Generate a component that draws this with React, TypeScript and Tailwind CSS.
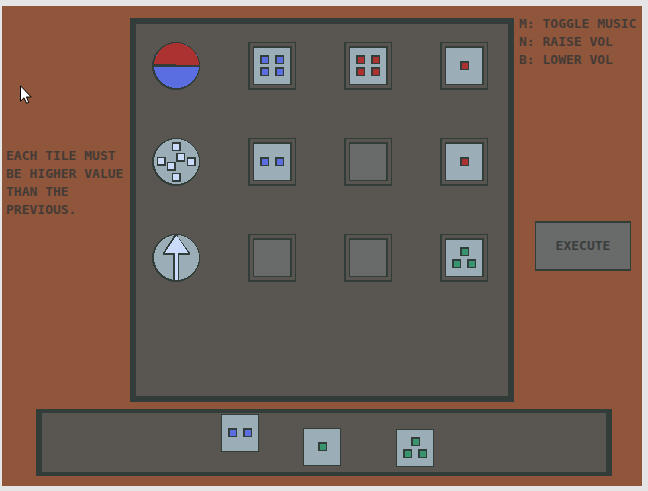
import React from "react";

type PipColor = "blue" | "red" | "green";
type Tile = { count: 1 | 2 | 3 | 4; color: PipColor };

const pipFill: Record<PipColor, string> = {
  blue: "bg-[#5b6ee1]",
  red: "bg-[#ac3232]",
  green: "bg-[#37946e]",
};

const pipRows: Record<Tile["count"], number[]> = {
  1: [1],
  2: [2],
  3: [1, 2],
  4: [2, 2],
};

function Pips({ count, color }: Tile) {
  const rows = pipRows[count];
  return (
    <span className={`flex size-9 flex-col gap-[3px] bg-[#9badb7] ${rows.length === 1 ? "pt-[13px]" : "pt-[7px]"}`}>
      {rows.map((n, row) => (
        <span key={row} className="flex justify-center gap-1.5">
          {Array.from({ length: n }, (_, i) => (
            <span
              key={i}
              className={`size-[9px] border-t-2 border-r border-b border-l-2 border-[#323c39] ${pipFill[color]}`}
            />
          ))}
        </span>
      ))}
    </span>
  );
}

function Slot({ tile }: { tile?: Tile }) {
  return (
    <button
      type="button"
      aria-label={tile ? `${tile.count} ${tile.color}` : "empty"}
      className="size-12 border-t border-r border-b-2 border-l-2 border-[#323c39] p-[3px]"
    >
      <span className="block border-t-2 border-r-2 border-b border-l border-[#323c39]">
        {tile ? <Pips {...tile} /> : <span className="block size-9 bg-[#696a6a]" />}
      </span>
    </button>
  );
}

function TrayTile({ tile, place }: { tile: Tile; place: string }) {
  return (
    <button
      type="button"
      aria-label={`${tile.count} ${tile.color}`}
      className={`absolute border border-[#323c39] ${place}`}
    >
      <Pips {...tile} />
    </button>
  );
}

function Disc({ fill, children }: { fill: string; children: React.ReactNode }) {
  return (
    <svg className="size-12" viewBox="0 0 48 48" shapeRendering="crispEdges" aria-hidden="true">
      <circle cx="24" cy="24" r="24" fill="#323c39" />
      <circle cx="24.5" cy="23.5" r="22.5" fill={fill} />
      {children}
    </svg>
  );
}

function ColorRule() {
  return (
    <Disc fill="#5b6ee1">
      <path d="M2 24A22.5 23 0 0 1 47 24Z" fill="#ac3232" />
      <path d="M0 22H24V23H48V25H0Z" fill="#323c39" />
    </Disc>
  );
}

function ScatterRule() {
  const dots = [
    { x: 20, y: 4, dx: 1, dy: 2 },
    { x: 24, y: 15, dx: 2, dy: 1 },
    { x: 5, y: 19, dx: 1, dy: 1 },
    { x: 15, y: 24, dx: 1, dy: 1 },
    { x: 35, y: 19, dx: 1, dy: 2 },
    { x: 20, y: 35, dx: 1, dy: 1 },
  ];
  return (
    <Disc fill="#9badb7">
      {dots.map(({ x, y, dx, dy }) => (
        <g key={`${x}-${y}`}>
          <rect x={x} y={y} width="9" height="9" fill="#323c39" />
          <rect x={x + dx} y={y + dy} width="6" height="6" fill="#cbdbfc" />
        </g>
      ))}
    </Disc>
  );
}

function AscendingRule() {
  return (
    <Disc fill="#9badb7">
      <path d="M23 0H26V3L38 19V21H27V47H21V21H11V19Z" fill="#323c39" />
      <path d="M24 2H25L36.5 19H26V46H23V19H12.5Z" fill="#cbdbfc" />
    </Disc>
  );
}

const rows: { rule: React.ReactNode; slots: (Tile | undefined)[] }[] = [
  {
    rule: <ColorRule />,
    slots: [
      { count: 4, color: "blue" },
      { count: 4, color: "red" },
      { count: 1, color: "red" },
    ],
  },
  {
    rule: <ScatterRule />,
    slots: [{ count: 2, color: "blue" }, undefined, { count: 1, color: "red" }],
  },
  {
    rule: <AscendingRule />,
    slots: [undefined, undefined, { count: 3, color: "green" }],
  },
];

export default function App() {
  return (
    <div className="min-h-screen bg-[#e5e5e5] pt-1.5 pr-1.5 pb-[5px] pl-0.5 font-['DejaVu_Sans_Mono',monospace] text-[13px] leading-[18px] font-bold text-[#453b36]">
      <main className="relative bg-[#8f563b] pt-3 pb-2.5">
        <div className="grid grid-cols-[1fr_384px_1fr]">
          <p className="pt-[129px] pl-1 whitespace-nowrap">
            EACH TILE MUST
            <br />
            BE HIGHER VALUE
            <br />
            THAN THE
            <br />
            PREVIOUS.
          </p>

          <section className="grid grid-cols-[repeat(4,48px)] grid-rows-[repeat(4,48px)] gap-12 border-6 border-[#323c39] bg-[#595652] py-[18px] pl-4">
            {rows.map((row, r) => (
              <React.Fragment key={r}>
                {row.rule}
                {row.slots.map((tile, i) => (
                  <Slot key={i} tile={tile} />
                ))}
              </React.Fragment>
            ))}
          </section>

          <aside className="-mt-[3px] pl-[5px] whitespace-nowrap">
            <p>M: TOGGLE MUSIC</p>
            <p>N: RAISE VOL</p>
            <p>B: LOWER VOL</p>
            <button
              type="button"
              className="mt-[152px] ml-4 h-[50px] w-24 border-x border-y-2 border-[#323c39] bg-[#696a6a] text-[#3b3d3c]"
            >
              EXECUTE
            </button>
          </aside>
        </div>

        <section className="relative mt-[7px] mr-[30px] ml-[34px] h-[67px] border-x-6 border-y-4 border-[#323c39] bg-[#595652]">
          <TrayTile tile={{ count: 2, color: "blue" }} place="left-[179px] top-px" />
          <TrayTile tile={{ count: 1, color: "green" }} place="left-[261px] top-[15px]" />
          <TrayTile tile={{ count: 3, color: "green" }} place="left-[354px] top-4" />
        </section>

        <svg
          className="absolute top-[79px] left-[18px] h-[19px] w-3"
          viewBox="0 0 12 19"
          aria-hidden="true"
        >
          <path
            d="M.5 .8V16.2L4 12.8L6.6 18.3L8.8 17.3L6.4 12H11.2Z"
            fill="#fff"
            stroke="#000"
            strokeWidth="1"
          />
        </svg>
      </main>
    </div>
  );
}
